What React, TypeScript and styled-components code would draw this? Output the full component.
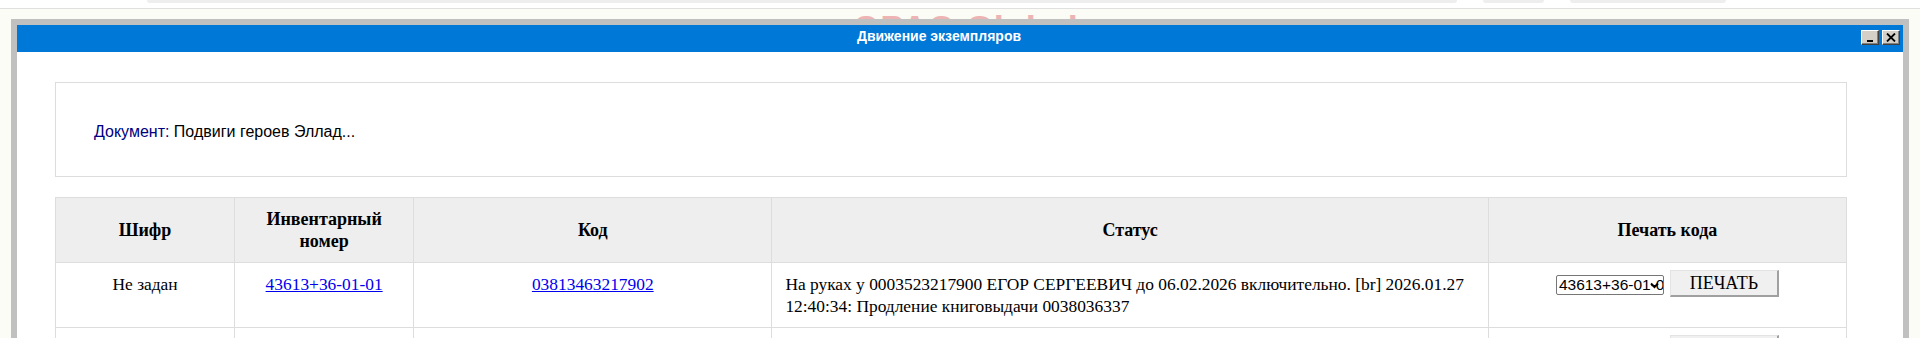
import React from 'react';
import styled, { createGlobalStyle } from 'styled-components';

const GlobalStyle = createGlobalStyle`
  html, body {
    margin: 0;
    padding: 0;
    background: #fbfcf5;
    overflow: hidden;
  }
  body {
    font-family: "Liberation Serif", "Times New Roman", serif;
  }
`;

interface CopyRow {
  shelf: string;
  inventory: string;
  code: string;
  status: string[];
}

const rows: CopyRow[] = [
  {
    shelf: 'Не задан',
    inventory: '43613+36-01-01',
    code: '03813463217902',
    status: [
      'На руках у 0003523217900 ЕГОР СЕРГЕЕВИЧ до 06.02.2026 включительно. [br] 2026.01.27',
      '12:40:34: Продление книговыдачи 0038036337',
    ],
  },
  {
    shelf: 'Не задан',
    inventory: '43613+36-01-02',
    code: '03813463217919',
    status: ['Доступен в фонде'],
  },
];

export default function App() {
  return (
    <Page>
      <GlobalStyle />
      <TopBar>
        <Pill $width={1310} />
        <Pill $width={61} />
        <Pill $width={156} />
      </TopBar>
      <SiteTitle>OPAC-Global</SiteTitle>

      {/* Modal window over the page */}
      <Dialog>
        <TitleBar>
          <TitleText>Движение экземпляров</TitleText>
          <Controls>
            <WinButton title="Свернуть">
              <svg width="8" height="10" viewBox="0 0 8 10">
                <rect x="1" y="7" width="6" height="2" fill="#000" />
              </svg>
            </WinButton>
            <WinButton title="Закрыть">
              <svg width="10" height="9" viewBox="0 0 10 9">
                <path d="M1 0.5 L9 8.5 M9 0.5 L1 8.5" stroke="#000" strokeWidth="1.8" />
              </svg>
            </WinButton>
          </Controls>
        </TitleBar>

        <Body>
          <DocBox>
            <DocLabel>Документ:</DocLabel> Подвиги героев Эллад...
          </DocBox>

          <Table>
            <colgroup>
              <col style={{ width: '10%' }} />
              <col style={{ width: '10%' }} />
              <col style={{ width: '20%' }} />
              <col style={{ width: '40%' }} />
              <col style={{ width: '20%' }} />
            </colgroup>
            <thead>
              <tr>
                <Th>Шифр</Th>
                <Th>Инвентарный номер</Th>
                <Th>Код</Th>
                <Th>Статус</Th>
                <Th>Печать кода</Th>
              </tr>
            </thead>
            <tbody>
              {rows.map(row => (
                <tr key={row.inventory}>
                  <Td>{row.shelf}</Td>
                  <Td><Link href="#">{row.inventory}</Link></Td>
                  <Td><Link href="#">{row.code}</Link></Td>
                  <Td $align="left">
                    {row.status.map(line => (
                      <StatusLine key={line}>{line}</StatusLine>
                    ))}
                  </Td>
                  <Td $tight>
                    <PrintGroup>
                      <SelectBox>
                        {row.inventory}
                        <Arrow width="9" height="7" viewBox="0 0 9 7">
                          <path d="M1 1.5 L4.5 5 L8 1.5" stroke="#000" strokeWidth="2" fill="none" />
                        </Arrow>
                      </SelectBox>
                      <PrintButton>ПЕЧАТЬ</PrintButton>
                    </PrintGroup>
                  </Td>
                </tr>
              ))}
            </tbody>
          </Table>
        </Body>
      </Dialog>
    </Page>
  );
}

const Page = styled.div`
  position: relative;
  width: 1920px;
  height: 338px;
  overflow: hidden;
  background: #fbfcf5;
`;

const TopBar = styled.div`
  height: 8px;
  background: #ffffff;
  border-bottom: 1px solid #e0e0e0;
  display: flex;
  align-items: flex-start;
  gap: 26px;
  padding-left: 147px;
`;

const Pill = styled.div<{ $width: number }>`
  width: ${p => p.$width}px;
  height: 3px;
  background: #eeeeee;
  border-radius: 0 0 6px 6px;
`;

const SiteTitle = styled.div`
  text-align: center;
  font-family: "Liberation Sans", Arial, sans-serif;
  font-weight: 700;
  font-size: 36px;
  line-height: 41px;
  color: #eeb3b3;
  padding-left: 10px;
`;

const Dialog = styled.div`
  position: absolute;
  top: 19px;
  left: 11px;
  right: 11px;
  bottom: -200px;
  border: 6px solid #c0c0c0;
  background: #ffffff;
`;

const TitleBar = styled.div`
  height: 27px;
  background: #0078d7;
  display: flex;
  align-items: flex-start;
`;

const TitleText = styled.div`
  flex: 1;
  text-align: center;
  padding-top: 1px;
  font-family: "Liberation Sans", Arial, sans-serif;
  font-weight: 700;
  font-size: 14px;
  line-height: 20px;
  color: #ffffff;
`;

const Controls = styled.div`
  display: flex;
  gap: 3px;
  padding: 5px 3px 0 0;
`;

const WinButton = styled.div`
  width: 18px;
  height: 15px;
  box-sizing: border-box;
  background: #d4d0c8;
  border-top: 1px solid #ffffff;
  border-left: 1px solid #ffffff;
  border-right: 1px solid #404040;
  border-bottom: 1px solid #404040;
  box-shadow: inset -1px -1px 0 #808080;
  display: flex;
  align-items: center;
  justify-content: center;
`;

const Body = styled.div`
  padding: 30px 56px 0 38px;
`;

const DocBox = styled.div`
  border: 1px solid #dddddd;
  padding: 40px 38px 35px;
  font-family: "Liberation Sans", Arial, sans-serif;
  font-size: 16px;
  line-height: 18px;
  color: #000000;
`;

const DocLabel = styled.span`
  color: #000080;
`;

const Table = styled.table`
  width: 100%;
  margin-top: 20px;
  border-collapse: collapse;
  table-layout: fixed;
  font-family: "Liberation Serif", "Times New Roman", serif;
  font-size: 17.4px;
  line-height: 22px;
  color: #000000;
`;

const Th = styled.th`
  background: #eeeeee;
  border: 1px solid #dddddd;
  padding: 10px 12px;
  font-size: 18px;
  font-weight: 700;
  text-align: center;
  vertical-align: middle;
`;

const Td = styled.td<{ $align?: 'left' | 'center'; $tight?: boolean }>`
  border: 1px solid #dddddd;
  padding: ${p => (p.$tight ? '7px 13px 10px' : '10px 13px')};
  text-align: ${p => p.$align ?? 'center'};
  vertical-align: top;
`;

const StatusLine = styled.div`
  white-space: nowrap;
`;

const Link = styled.a`
  color: #0000ee;
  text-decoration: underline;
`;

const PrintGroup = styled.div`
  display: flex;
  justify-content: center;
  align-items: flex-start;
  gap: 6px;
`;

const SelectBox = styled.div`
  position: relative;
  width: 108px;
  height: 20px;
  margin-top: 5px;
  box-sizing: border-box;
  border: 1px solid #767676;
  border-radius: 2px;
  background: #ffffff;
  padding-left: 2px;
  overflow: hidden;
  white-space: nowrap;
  text-align: left;
  font-family: "Liberation Sans", Arial, sans-serif;
  font-size: 15.5px;
  line-height: 18px;
`;

const Arrow = styled.svg`
  position: absolute;
  right: 4px;
  top: 6px;
`;

const PrintButton = styled.div`
  width: 109px;
  height: 27px;
  box-sizing: border-box;
  background: #f0f0f0;
  border-top: 1px solid #e3e3e3;
  border-left: 1px solid #e3e3e3;
  border-right: 2px solid #a0a0a0;
  border-bottom: 2px solid #a0a0a0;
  font-family: "Liberation Serif", "Times New Roman", serif;
  font-size: 18px;
  line-height: 24px;
  text-align: center;
`;
